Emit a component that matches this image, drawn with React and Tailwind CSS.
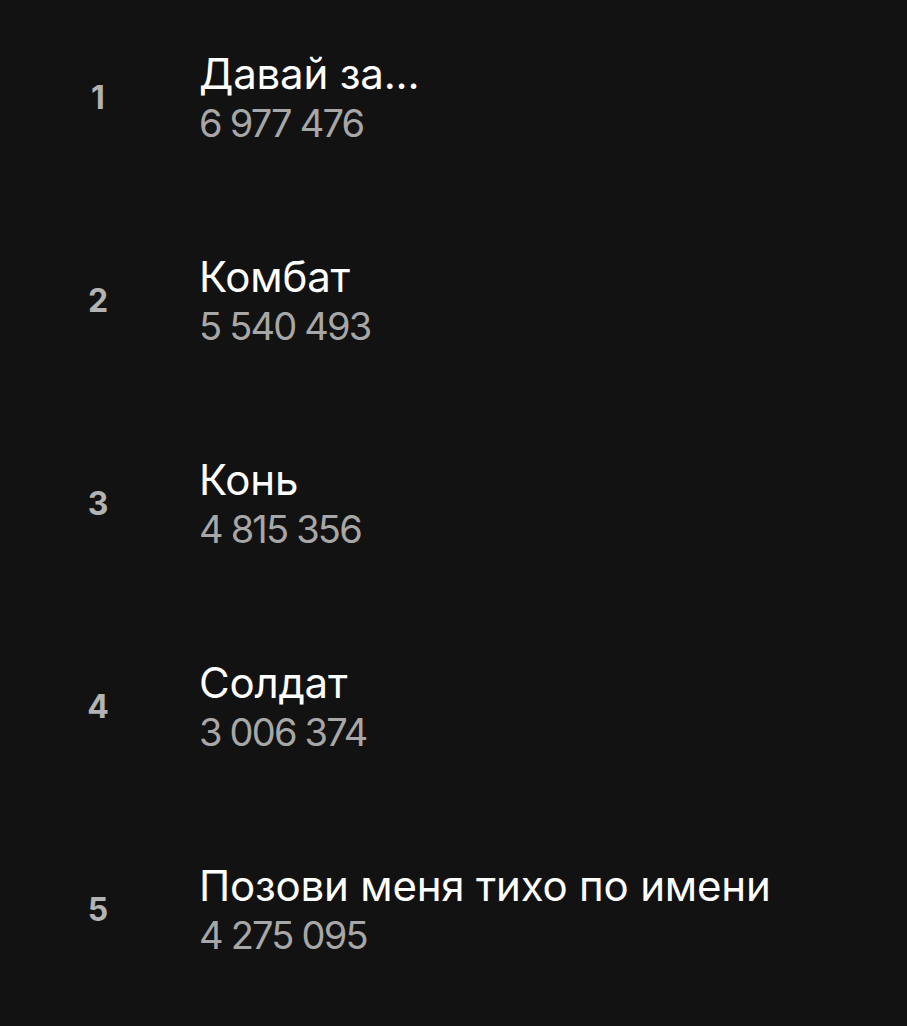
export default function App() {
  const rows = [
    ["1", "Давай за...", "6 977 476"],
    ["2", "Комбат", "5 540 493"],
    ["3", "Конь", "4 815 356"],
    ["4", "Солдат", "3 006 374"],
    ["5", "Позови меня тихо по имени", "4 275 095"],
  ];
  return (
    <div className="w-[907px] h-[1026px] bg-[#121212] overflow-hidden" style={{ fontFamily: "Inter, 'Noto Sans', sans-serif" }}>
      <div className="flex flex-col">
        {rows.map(([n, t, c], i) => (
          <div key={i} className="h-[203px] flex items-center first:-mt-[4px]">
            <div className="w-[199px] flex">
              <span className="w-[196px] text-center text-[32px] font-bold text-[#b3b3b3] leading-none">{n}</span>
            </div>
            <div className="flex flex-col">
              <span className="text-[42px] text-white leading-[50px] tracking-[-0.2px]">{t}</span>
              <span className="text-[38px] text-[#a7a7a7] leading-[48px] tracking-[-1.8px]">{c}</span>
            </div>
          </div>
        ))}
      </div>
    </div>
  );
}
